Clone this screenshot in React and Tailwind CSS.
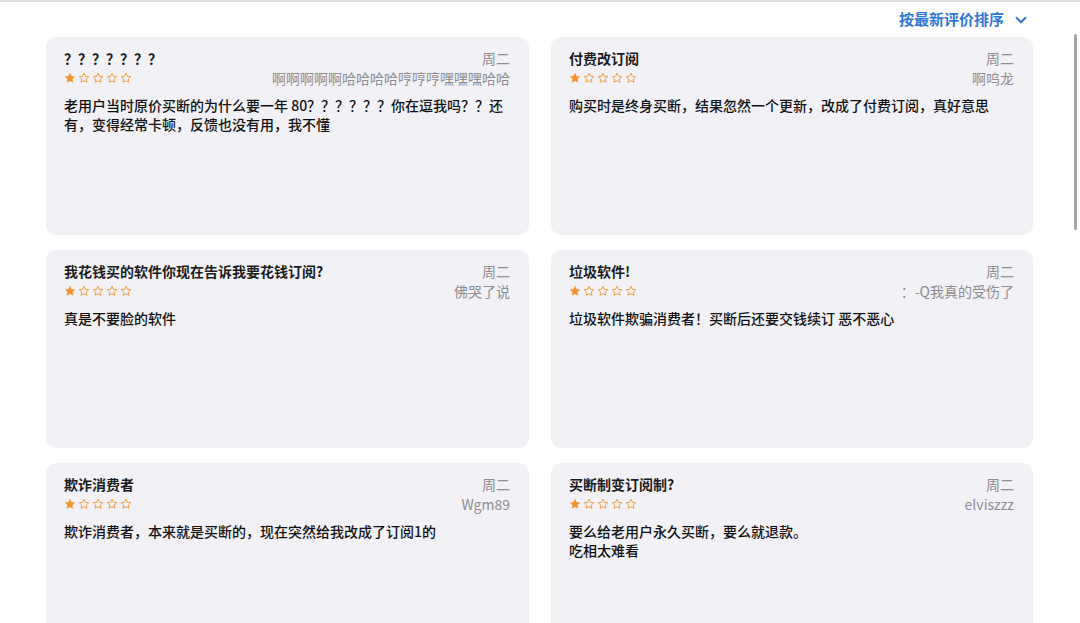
import { ChevronDown } from "lucide-react";

const reviews = [
  {
    title: "？？？？？？？",
    date: "周二",
    author: "啊啊啊啊啊哈哈哈哈哼哼哼嘿嘿嘿哈哈",
    body: "老用户当时原价买断的为什么要一年 80？？？？？？你在逗我吗？？还有，变得经常卡顿，反馈也没有用，我不懂",
  },
  {
    title: "付费改订阅",
    date: "周二",
    author: "啊呜龙",
    body: "购买时是终身买断，结果忽然一个更新，改成了付费订阅，真好意思",
  },
  {
    title: "我花钱买的软件你现在告诉我要花钱订阅?",
    date: "周二",
    author: "佛哭了说",
    body: "真是不要脸的软件",
  },
  {
    title: "垃圾软件!",
    date: "周二",
    author: "：-Q我真的受伤了",
    body: "垃圾软件欺骗消费者！买断后还要交钱续订 恶不恶心",
  },
  {
    title: "欺诈消费者",
    date: "周二",
    author: "Wgm89",
    body: "欺诈消费者，本来就是买断的，现在突然给我改成了订阅1的",
  },
  {
    title: "买断制变订阅制?",
    date: "周二",
    author: "elviszzz",
    body: "要么给老用户永久买断，要么就退款。\n吃相太难看",
  },
];

const STAR = "M12 2.5l2.9 6.1 6.6.8-4.9 4.6 1.3 6.6L12 17.3l-5.9 3.3 1.3-6.6-4.9-4.6 6.6-.8z";

function Stars({ rating }) {
  return (
    <div className="flex items-center gap-[2px]">
      {[0, 1, 2, 3, 4].map((i) => (
        <svg key={i} viewBox="0 0 24 24" className="w-3 h-3">
          <path
            d={STAR}
            fill={i < rating ? "#f0952e" : "none"}
            stroke="#f0952e"
            strokeWidth={i < rating ? 1 : 1.8}
            strokeLinejoin="round"
          />
        </svg>
      ))}
    </div>
  );
}

function ReviewCard({ review }) {
  return (
    <div className="bg-[#f1f1f6] rounded-[10px] h-[198px] pl-[18px] pr-[19px] pt-[11px]">
      <div className="flex justify-between items-center h-5">
        <span className="text-[14px] font-semibold text-[#1c1c1e]">{review.title}</span>
        <span className="text-[14px] text-[#8e8e93]">{review.date}</span>
      </div>
      <div className="flex justify-between items-center h-[18px] mt-[1px]">
        <Stars rating={1} />
        <span className="text-[14px] text-[#8e8e93]">{review.author}</span>
      </div>
      <p className="mt-[9px] text-[14px] leading-[19px] font-medium text-[#111113] whitespace-pre-line">
        {review.body}
      </p>
    </div>
  );
}

export default function App() {
  return (
    <div
      className="relative w-[1080px] h-[623px] overflow-hidden bg-white border-t-2 border-[#dcdcdc]"
      style={{ fontFamily: '"Noto Sans CJK SC", "Noto Sans", sans-serif' }}
    >
      {/* sort control */}
      <div className="flex justify-end items-center h-[35px] pr-[50px]">
        <button className="flex items-center gap-2 text-[#2f77d6] text-[15px] font-semibold">
          按最新评价排序
          <ChevronDown className="w-[18px] h-[18px]" strokeWidth={2.5} />
        </button>
      </div>

      <div className="grid grid-cols-[483px_482px] gap-x-[22px] gap-y-[15px] pl-[46px]">
        {reviews.map((r, i) => (
          <ReviewCard key={i} review={r} />
        ))}
      </div>

      {/* scrollbar thumb */}
      <div className="absolute right-[3px] top-[32px] w-[3px] h-[196px] rounded-full bg-[#a6a6a6]" />
    </div>
  );
}
